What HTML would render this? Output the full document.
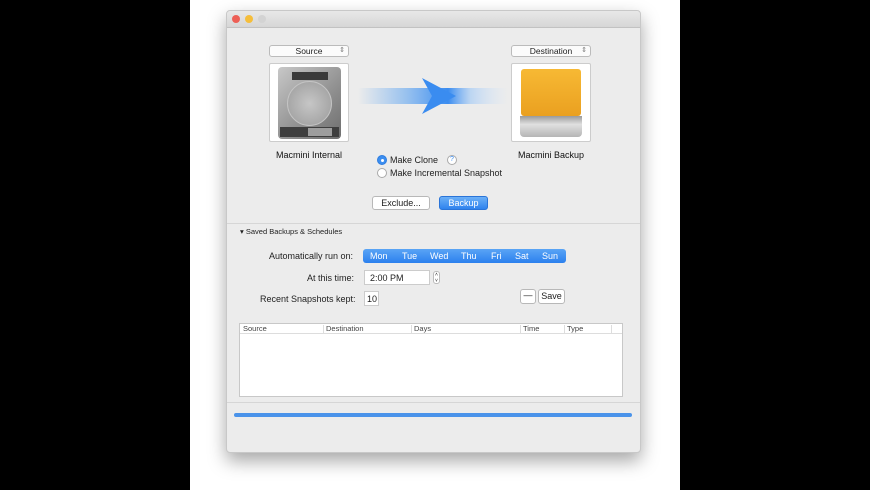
<!DOCTYPE html>
<html><head><meta charset="utf-8"><style>
*{box-sizing:border-box;margin:0;padding:0}
body{width:870px;height:490px;background:#000;position:relative;overflow:hidden;font-family:"Liberation Sans",sans-serif;font-size:9px;color:#222}
.page{position:absolute;left:190px;top:0;width:490px;height:490px;background:#fff}
.win{position:absolute;left:226px;top:10px;width:415px;height:443px;background:#ececec;border:1px solid #c8c8c8;border-radius:4px;box-shadow:0 8px 18px rgba(0,0,0,.35)}
.tb{height:17px;background:linear-gradient(#e8e8e8,#d6d6d6);border-bottom:1px solid #c2c2c2;border-radius:4px 4px 0 0;position:relative}
.dot{position:absolute;top:4px;width:8px;height:8px;border-radius:50%}
.a{position:absolute}
.pop{position:absolute;height:12px;background:#fbfbfb;border:1px solid #bbb;border-radius:3px;font-size:8.5px;text-align:center;line-height:10px}
.pop:after{content:"⇕";position:absolute;right:3px;top:0;font-size:7px;color:#777}
.box{position:absolute;width:80px;height:79px;background:#fff;border:1px solid #ccc;border-radius:2px}
.btn{position:absolute;height:14px;border:1px solid #b8b8b8;border-radius:3px;background:#fff;font-size:9px;text-align:center;line-height:12px}
.radio{position:absolute;width:10px;height:10px;border-radius:50%;border:1px solid #aaa;background:#fff}
.lbl{position:absolute;font-size:9px;white-space:nowrap}
</style></head><body>
<div class="page"></div>
<div class="win">
 <div class="tb">
  <div class="dot" style="left:5px;background:#ed5f56"></div>
  <div class="dot" style="left:18px;background:#f5be3b"></div>
  <div class="dot" style="left:31px;background:#d3d3d3"></div>
 </div>
</div>
<div class="pop" style="left:269px;top:45px;width:80px">Source</div>
<div class="pop" style="left:511px;top:45px;width:80px">Destination</div>
<div class="box" style="left:269px;top:63px">
 <div class="a" style="left:8px;top:3px;width:63px;height:72px;border-radius:4px;background:linear-gradient(135deg,#c8c8c8,#8e8e8e 60%,#6e6e6e);">
  <div class="a" style="left:14px;top:5px;width:36px;height:8px;background:#3a3a3a"></div>
  <div class="a" style="left:9px;top:14px;width:45px;height:45px;border-radius:50%;border:1px solid #c4c4c4;background:radial-gradient(#c6c6c6,#9a9a9a)"></div>
  <div class="a" style="left:2px;top:60px;width:59px;height:10px;background:#3e3e3e"></div>
  <div class="a" style="left:30px;top:61px;width:24px;height:8px;background:#ddd;opacity:.6"></div>
 </div>
</div>
<div class="box" style="left:511px;top:63px">
 <div class="a" style="left:9px;top:5px;width:60px;height:47px;border-radius:3px;background:linear-gradient(#f7b934,#eaa020)"></div>
 <div class="a" style="left:8px;top:52px;width:62px;height:21px;border-radius:0 0 4px 4px;background:linear-gradient(#9a9a9a,#e0e0e0 40%,#b5b5b5)"></div>
</div>
<svg class="a" style="left:358px;top:78px" width="150" height="36" viewBox="0 0 150 36">
 <defs><linearGradient id="g" x1="0" x2="1"><stop offset="0" stop-color="#6aaaf0" stop-opacity="0"/><stop offset=".3" stop-color="#6aaaf0" stop-opacity=".6"/><stop offset=".6" stop-color="#3a8cf0"/><stop offset=".75" stop-color="#a8ccf5" stop-opacity=".7"/><stop offset="1" stop-color="#cfe3fa" stop-opacity="0"/></linearGradient></defs>
 <rect x="0" y="10" width="150" height="16" fill="url(#g)"/>
 <path d="M64 0 L98 18 L64 36 L74 18 Z" fill="#3a8cf0"/>
</svg>
<div class="lbl" style="left:276px;top:150px;color:#111">Macmini Internal</div>
<div class="lbl" style="left:518px;top:150px;color:#111">Macmini Backup</div>
<div class="radio" style="left:377px;top:155px;border-color:#2e7de0;background:#3c8ef0"><div class="a" style="left:3px;top:3px;width:3px;height:3px;border-radius:50%;background:#fff"></div></div>
<div class="lbl" style="left:390px;top:155px">Make Clone</div>
<div class="radio" style="left:447px;top:155px;font-size:7px;text-align:center;line-height:8px;color:#3a8cf0">?</div>
<div class="radio" style="left:377px;top:168px"></div>
<div class="lbl" style="left:390px;top:168px">Make Incremental Snapshot</div>
<div class="btn" style="left:372px;top:196px;width:58px">Exclude...</div>
<div class="btn" style="left:439px;top:196px;width:49px;background:linear-gradient(#6cb0f7,#2f83ee);border-color:#2a74d8;color:#fff">Backup</div>
<div class="a" style="left:227px;top:223px;width:413px;height:1px;background:#d6d6d6"></div>
<div class="lbl" style="left:240px;top:227px;font-size:7.5px">▾ Saved Backups &amp; Schedules</div>
<div class="lbl" style="left:269px;top:251px">Automatically run on:</div>
<div class="a" style="left:363px;top:249px;width:203px;height:14px;border-radius:3px;background:linear-gradient(#5aa4f5,#2b80ee);color:#fff;font-size:9px;line-height:14px">
 <span class="a" style="left:7px">Mon</span><span class="a" style="left:39px">Tue</span><span class="a" style="left:67px">Wed</span><span class="a" style="left:98px">Thu</span><span class="a" style="left:128px">Fri</span><span class="a" style="left:152px">Sat</span><span class="a" style="left:179px">Sun</span>
</div>
<div class="lbl" style="left:307px;top:273px">At this time:</div>
<div class="a" style="left:364px;top:270px;width:66px;height:15px;background:#fff;border:1px solid #ccc;font-size:9px;padding:2px 0 0 5px">2:00 PM</div>
<div class="a" style="left:433px;top:271px;width:7px;height:13px;border:1px solid #bbb;border-radius:3px;background:#fff;font-size:5px;text-align:center;line-height:6px">˄<br>˅</div>
<div class="lbl" style="left:260px;top:294px">Recent Snapshots kept:</div>
<div class="a" style="left:364px;top:291px;width:15px;height:15px;background:#fff;border:1px solid #ccc;font-size:9px;padding:2px 0 0 2px">10</div>
<div class="btn" style="left:520px;top:289px;width:16px;height:15px;line-height:11px">—</div>
<div class="btn" style="left:538px;top:289px;width:27px;height:15px">Save</div>
<div class="a" style="left:239px;top:323px;width:384px;height:74px;background:#fff;border:1px solid #c8c8c8">
 <div class="a" style="left:0;top:0;width:382px;height:10px;border-bottom:1px solid #ddd;font-size:7.5px;color:#444;line-height:9px">
  <span class="a" style="left:3px">Source</span><span class="a" style="left:86px">Destination</span><span class="a" style="left:174px">Days</span><span class="a" style="left:283px">Time</span><span class="a" style="left:327px">Type</span>
  <span class="a" style="left:83px;top:1px;width:1px;height:8px;background:#ddd"></span><span class="a" style="left:171px;top:1px;width:1px;height:8px;background:#ddd"></span><span class="a" style="left:280px;top:1px;width:1px;height:8px;background:#ddd"></span><span class="a" style="left:324px;top:1px;width:1px;height:8px;background:#ddd"></span><span class="a" style="left:371px;top:1px;width:1px;height:8px;background:#ddd"></span>
 </div>
</div>
<div class="a" style="left:227px;top:402px;width:413px;height:1px;background:#d6d6d6"></div>
<div class="a" style="left:234px;top:413px;width:398px;height:4px;border-radius:2px;background:#4a93ea"></div>
</body></html>
